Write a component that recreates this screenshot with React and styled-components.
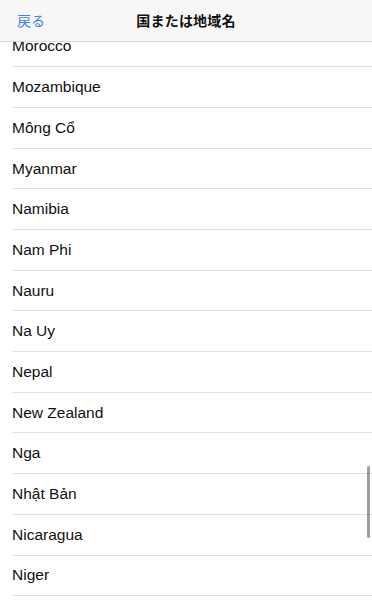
import React from "react";
import styled, { createGlobalStyle } from "styled-components";

const countries = [
    "Morocco",
    "Mozambique",
    "Mông Cổ",
    "Myanmar",
    "Namibia",
    "Nam Phi",
    "Nauru",
    "Na Uy",
    "Nepal",
    "New Zealand",
    "Nga",
    "Nhật Bản",
    "Nicaragua",
    "Niger",
];

const GlobalStyle = createGlobalStyle`
    html, body {
        margin: 0;
        padding: 0;
        background: #ffffff;
    }
    body {
        font-family: "Liberation Sans", "Noto Sans CJK JP", sans-serif;
        -webkit-font-smoothing: antialiased;
    }
`;

const Screen = styled.div`
    position: relative;
    width: 372px;
    height: 600px;
    overflow: hidden;
    background: #ffffff;
`;

const Header = styled.header`
    position: sticky;
    top: 0;
    z-index: 2;
    height: 42px;
    display: grid;
    grid-template-columns: 1fr auto 1fr;
    align-items: center;
    padding: 0 17px 1px;
    background: rgba(247, 247, 248, 0.98);
    border-bottom: 1px solid #d8d8da;
    box-sizing: border-box;
`;

const BackButton = styled.span`
    font-family: "Noto Sans CJK JP", sans-serif;
    font-size: 14px;
    color: #3b82f0;
    justify-self: start;
`;

const Title = styled.h1`
    margin: 0;
    font-family: "Noto Sans CJK JP", sans-serif;
    font-size: 14px;
    font-weight: 700;
    color: #111111;
    letter-spacing: 0.2px;
`;

const List = styled.ul`
    list-style: none;
    margin: -15.4px 0 0 0;
    padding: 0 0 0 12px;
`;

const Row = styled.li`
    height: 40.7px;
    display: flex;
    align-items: center;
    border-bottom: 1px solid #e2e2e4;
    box-sizing: border-box;
    font-size: 15.5px;
    color: #111111;
`;

const ScrollThumb = styled.div`
    position: absolute;
    right: 2px;
    top: 466px;
    width: 3px;
    height: 72px;
    border-radius: 2px;
    background: rgba(0, 0, 0, 0.38);
`;

const App = () => {
    return (
        <Screen>
            <GlobalStyle />
            <Header>
                <BackButton>戻る</BackButton>
                <Title>国または地域名</Title>
                <span />
            </Header>
            <List>
                {countries.map((name) => (
                    <Row key={name}>{name}</Row>
                ))}
            </List>
            <ScrollThumb />
        </Screen>
    );
};

export default App;
